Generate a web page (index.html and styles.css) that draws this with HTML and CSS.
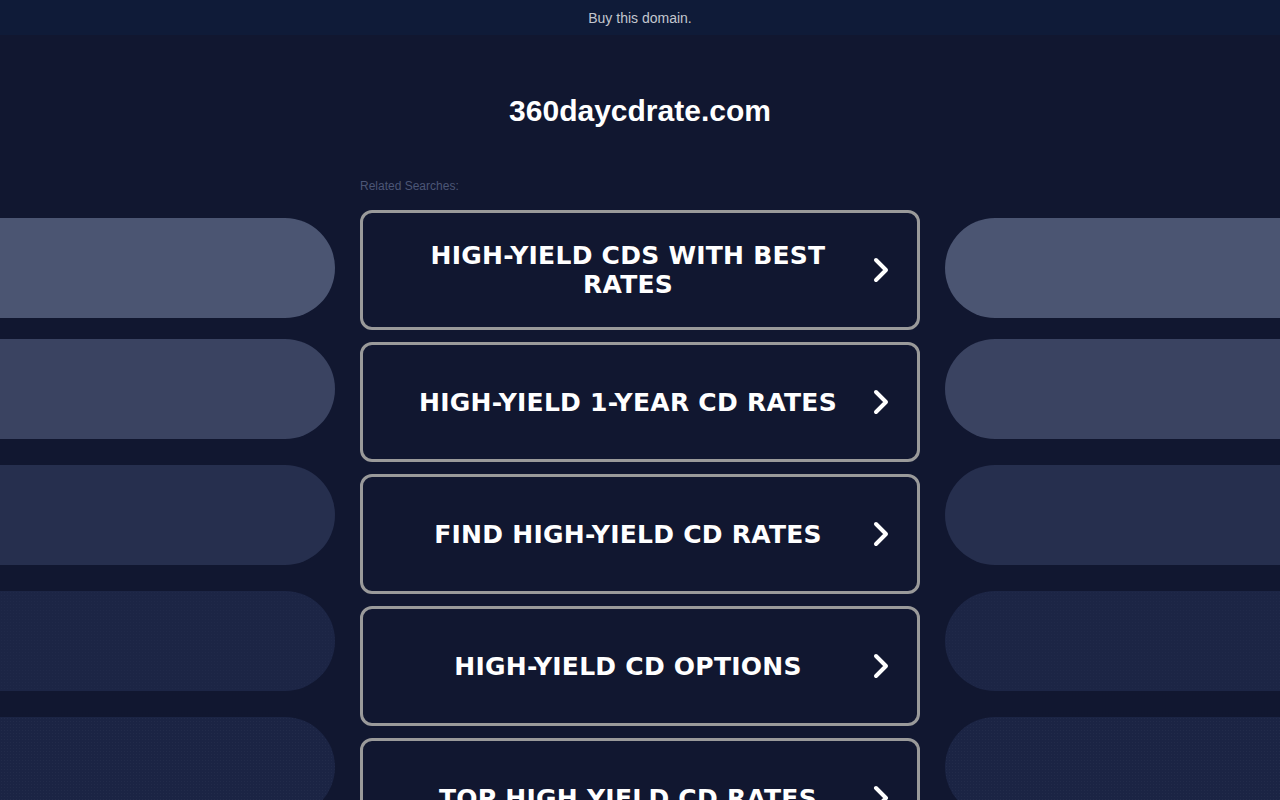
FILE: index.html
```html
<!DOCTYPE html>
<html lang="en">
<head>
<meta charset="utf-8">
<title>360daycdrate.com</title>
<link rel="stylesheet" href="styles.css">
</head>
<body>
<div class="topbar"><a class="buy" href="#">Buy this domain.</a></div>
<h1 class="domain">360daycdrate.com</h1>
<div class="layout">
  <div class="side side-left">
    <div class="pill p1"></div>
    <div class="pill p2"></div>
    <div class="pill p3"></div>
    <div class="pill p4"></div>
    <div class="pill p5"></div>
  </div>
  <div class="center">
    <div class="label">Related Searches:</div>
    <div class="list">
      <a class="item" href="#"><span class="text">HIGH-YIELD CDS WITH BEST RATES</span><svg class="chev" viewBox="0 0 16 26" width="16" height="26"><path d="M3 3 L13 13 L3 23" fill="none" stroke="#fff" stroke-width="4" stroke-linecap="round" stroke-linejoin="round"/></svg></a>
      <a class="item" href="#"><span class="text">HIGH-YIELD 1-YEAR CD RATES</span><svg class="chev" viewBox="0 0 16 26" width="16" height="26"><path d="M3 3 L13 13 L3 23" fill="none" stroke="#fff" stroke-width="4" stroke-linecap="round" stroke-linejoin="round"/></svg></a>
      <a class="item" href="#"><span class="text">FIND HIGH-YIELD CD RATES</span><svg class="chev" viewBox="0 0 16 26" width="16" height="26"><path d="M3 3 L13 13 L3 23" fill="none" stroke="#fff" stroke-width="4" stroke-linecap="round" stroke-linejoin="round"/></svg></a>
      <a class="item" href="#"><span class="text">HIGH-YIELD CD OPTIONS</span><svg class="chev" viewBox="0 0 16 26" width="16" height="26"><path d="M3 3 L13 13 L3 23" fill="none" stroke="#fff" stroke-width="4" stroke-linecap="round" stroke-linejoin="round"/></svg></a>
      <a class="item" href="#"><span class="text">TOP HIGH YIELD CD RATES</span><svg class="chev" viewBox="0 0 16 26" width="16" height="26"><path d="M3 3 L13 13 L3 23" fill="none" stroke="#fff" stroke-width="4" stroke-linecap="round" stroke-linejoin="round"/></svg></a>
    </div>
  </div>
  <div class="side side-right">
    <div class="pill p1"></div>
    <div class="pill p2"></div>
    <div class="pill p3"></div>
    <div class="pill p4"></div>
    <div class="pill p5"></div>
  </div>
</div>
</body>
</html>
```
FILE: styles.css
```css
html, body {
  margin: 0;
  padding: 0;
  background: #111730;
  height: 100%;
  overflow: hidden;
}
body {
  font-family: "Liberation Sans", Arial, sans-serif;
}
.topbar {
  height: 35px;
  background: #0f1b38;
  display: flex;
  align-items: center;
  justify-content: center;
}
.buy {
  color: #c3c7cf;
  font-size: 14px;
  text-decoration: none;
  line-height: 16px;
}
.domain {
  margin: 0;
  padding-top: 59px;
  height: 34px;
  line-height: 34px;
  text-align: center;
  color: #ffffff;
  font-size: 30px;
  font-weight: bold;
}
.layout {
  display: grid;
  grid-template-columns: 335px 560px 335px;
  column-gap: 25px;
  padding-top: 51px;
}
.side {
  padding-top: 39px;
  display: flex;
  flex-direction: column;
}
.pill {
  height: 100px;
  margin-bottom: 26px;
}
.pill.p1 { margin-bottom: 21px; background: #4b5572; }
.pill.p2 { background: #3a4361; }
.pill.p3 { background: #262f4e; }
.pill.p4 {
  background-color: #1c2545;
  background-image: radial-gradient(rgba(255,255,255,0.018) 0.6px, transparent 0.8px);
  background-size: 3px 3px;
}
.pill.p5 {
  background-color: #1b2444;
  background-image: radial-gradient(rgba(255,255,255,0.03) 0.6px, transparent 0.8px);
  background-size: 3px 3px;
}
.side-left .pill { border-radius: 0 50px 50px 0; }
.side-right .pill { border-radius: 50px 0 0 50px; }
.label {
  font-size: 12px;
  line-height: 14px;
  color: #4c5676;
  margin-bottom: 17px;
}
.list {
  display: flex;
  flex-direction: column;
  gap: 12px;
}
.item {
  box-sizing: border-box;
  height: 120px;
  border: 3px solid #9a9a9a;
  border-radius: 12px;
  display: flex;
  align-items: center;
  text-decoration: none;
  color: #ffffff;
}
.text {
  flex: 1;
  padding-left: 20px;
  text-align: center;
  font-family: "DejaVu Sans", Verdana, sans-serif;
  font-weight: bold;
  font-size: 25px;
  letter-spacing: 0.25px;
  line-height: 29px;
}
.chev {
  flex: none;
  margin-right: 28px;
}
```
